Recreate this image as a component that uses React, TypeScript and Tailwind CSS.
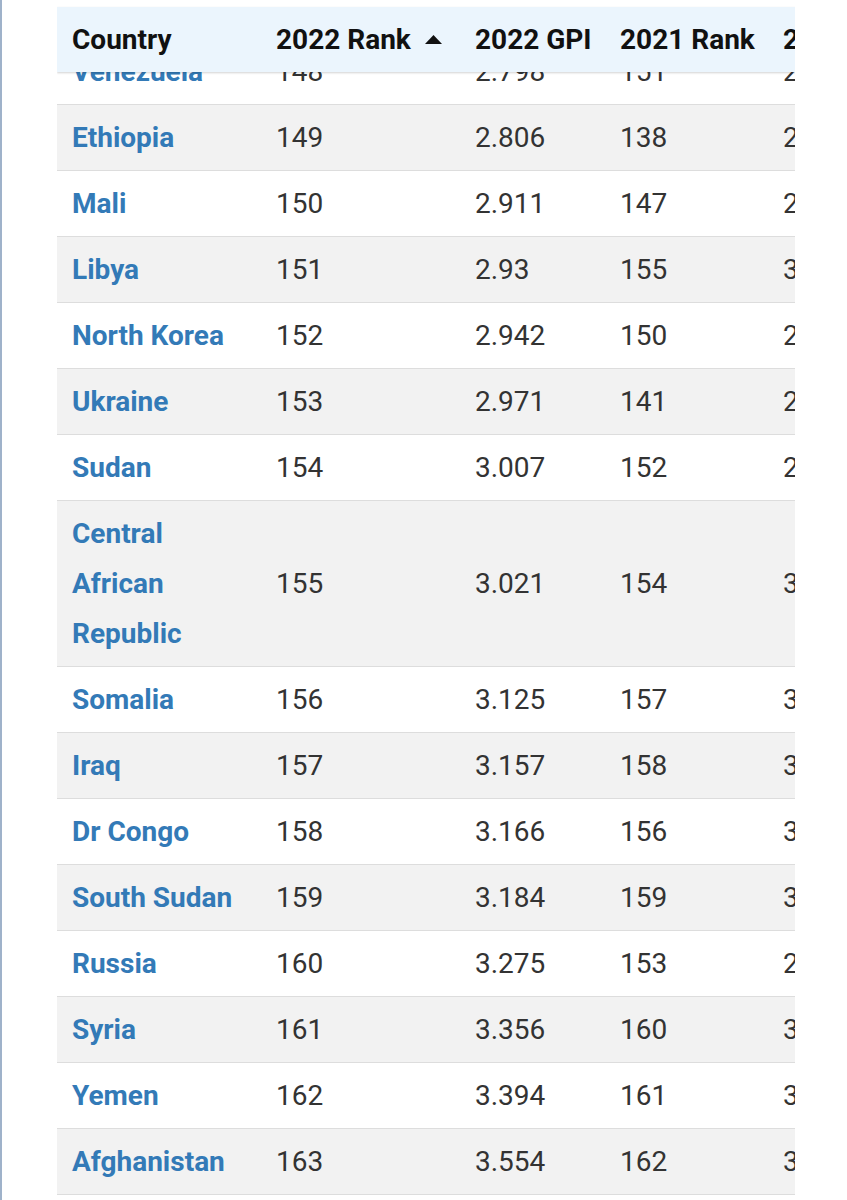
import { Fragment } from "react";

type Row = {
  country: string[];
  rank22: string;
  gpi22: string;
  rank21: string;
  gpi21: string;
};

const rows: Row[] = [
  { country: ["Venezuela"], rank22: "148", gpi22: "2.798", rank21: "151", gpi21: "2.853" },
  { country: ["Ethiopia"], rank22: "149", gpi22: "2.806", rank21: "138", gpi21: "2.641" },
  { country: ["Mali"], rank22: "150", gpi22: "2.911", rank21: "147", gpi21: "2.794" },
  { country: ["Libya"], rank22: "151", gpi22: "2.93", rank21: "155", gpi21: "3.068" },
  { country: ["North Korea"], rank22: "152", gpi22: "2.942", rank21: "150", gpi21: "2.836" },
  { country: ["Ukraine"], rank22: "153", gpi22: "2.971", rank21: "141", gpi21: "2.694" },
  { country: ["Sudan"], rank22: "154", gpi22: "3.007", rank21: "152", gpi21: "2.883" },
  { country: ["Central", "African", "Republic"], rank22: "155", gpi22: "3.021", rank21: "154", gpi21: "3.007" },
  { country: ["Somalia"], rank22: "156", gpi22: "3.125", rank21: "157", gpi21: "3.171" },
  { country: ["Iraq"], rank22: "157", gpi22: "3.157", rank21: "158", gpi21: "3.184" },
  { country: ["Dr Congo"], rank22: "158", gpi22: "3.166", rank21: "156", gpi21: "3.094" },
  { country: ["South Sudan"], rank22: "159", gpi22: "3.184", rank21: "159", gpi21: "3.209" },
  { country: ["Russia"], rank22: "160", gpi22: "3.275", rank21: "153", gpi21: "2.993" },
  { country: ["Syria"], rank22: "161", gpi22: "3.356", rank21: "160", gpi21: "3.267" },
  { country: ["Yemen"], rank22: "162", gpi22: "3.394", rank21: "161", gpi21: "3.325" },
  { country: ["Afghanistan"], rank22: "163", gpi22: "3.554", rank21: "162", gpi21: "3.537" },
];

const Cols = () => (
  <colgroup>
    <col className="w-[204px]" />
    <col className="w-[199px]" />
    <col className="w-[145px]" />
    <col className="w-[163px]" />
    <col className="w-[140px]" />
  </colgroup>
);

const App = () => {
  return (
    <div
      className="min-h-[1200px] bg-white border-l-2 border-[#9fb2ca]"
      style={{ fontFamily: "Roboto, 'Liberation Sans', sans-serif" }}
    >
      <div className="relative ml-[55px] w-[738px] h-[1200px] overflow-hidden">
        {/* sticky header lying over the scrolled rows */}
        <div className="absolute left-0 top-[7px] z-10 w-[878px] bg-[#ebf5fd] shadow-[0_1px_2px_rgba(0,0,0,0.18)]">
          <table className="table-fixed w-[851px] border-collapse">
            <Cols />
            <thead>
              <tr className="h-[65px] text-left text-[28px] font-bold text-[#111]">
                <th className="pl-[15px] font-bold">Country</th>
                <th className="pl-[15px] font-bold">
                  <span className="inline-flex items-center gap-[14px]">
                    2022 Rank
                    <svg width="17" height="9" viewBox="0 0 17 9">
                      <path d="M0 9 L8.5 0 L17 9 Z" fill="#111" />
                    </svg>
                  </span>
                </th>
                <th className="pl-[15px] font-bold">2022 GPI</th>
                <th className="pl-[15px] font-bold">2021 Rank</th>
                <th className="pl-[15px] font-bold">2021 GPI</th>
              </tr>
            </thead>
          </table>
        </div>

        <table className="mt-[39px] table-fixed w-[851px] border-collapse">
          <Cols />
          <tbody>
            {rows.map((r, i) => (
              <tr
                key={r.rank22}
                className={`border-b border-[#dddddd] text-[28px] leading-[50px] ${
                  i % 2 === 1 ? "bg-[#f2f2f2]" : "bg-white"
                }`}
              >
                <td className="pl-[15px] pt-[8px] pb-[7px] font-bold text-[#337ab7] align-middle">
                  {r.country.map((c, j) => (
                    <Fragment key={c}>
                      {j > 0 && <br />}
                      {c}
                    </Fragment>
                  ))}
                </td>
                <td className="pl-[15px] pt-[8px] pb-[7px] text-[#333]">{r.rank22}</td>
                <td className="pl-[15px] pt-[8px] pb-[7px] text-[#333]">{r.gpi22}</td>
                <td className="pl-[15px] pt-[8px] pb-[7px] text-[#333]">{r.rank21}</td>
                <td className="pl-[15px] pt-[8px] pb-[7px] text-[#333]">{r.gpi21}</td>
              </tr>
            ))}
          </tbody>
        </table>
      </div>
    </div>
  );
};

export default App;
